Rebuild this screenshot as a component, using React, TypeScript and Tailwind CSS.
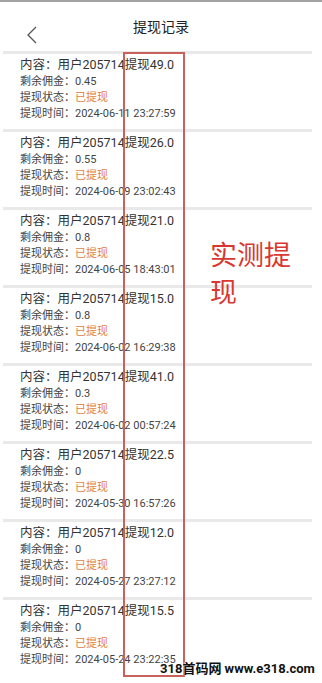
import React from "react";

type Record = {
  amount: string;
  balance: string;
  time: string;
};

const records: Record[] = [
  { amount: "49.0", balance: "0.45", time: "2024-06-11 23:27:59" },
  { amount: "26.0", balance: "0.55", time: "2024-06-09 23:02:43" },
  { amount: "21.0", balance: "0.8", time: "2024-06-05 18:43:01" },
  { amount: "15.0", balance: "0.8", time: "2024-06-02 16:29:38" },
  { amount: "41.0", balance: "0.3", time: "2024-06-02 00:57:24" },
  { amount: "22.5", balance: "0", time: "2024-05-30 16:57:26" },
  { amount: "12.0", balance: "0", time: "2024-05-27 23:27:12" },
  { amount: "15.5", balance: "0", time: "2024-05-24 23:22:35" },
];

function RecordCard({ record }: { record: Record }) {
  return (
    <div>
      <div className="ml-[3px] mr-[10px] h-[3px] bg-[#e9e9e9]" />
      <div className="pl-[20px] pt-[2px] pb-[7px]">
        <p className="text-[12.5px] leading-[18px] text-[#333]">
          内容：用户205714提现{record.amount}
        </p>
        <p className="text-[11px] leading-[16px] text-[#444]">
          剩余佣金：{record.balance}
        </p>
        <p className="text-[11px] leading-[16px] text-[#444]">
          提现状态：<span className="text-[#e27d3e]">已提现</span>
        </p>
        <p className="text-[11px] leading-[16px] text-[#444]">
          提现时间：{record.time}
        </p>
      </div>
    </div>
  );
}

export default function App() {
  return (
    <div
      className="relative h-[683px] w-[322px] overflow-hidden bg-white"
      style={{ fontFamily: 'Roboto, "Noto Sans CJK SC", sans-serif' }}
    >
      <div className="h-[2px] bg-[#a3a3a3]" />
      <header className="relative flex h-[49px] items-center justify-center">
        <svg
          className="absolute left-[26px] top-[24px]"
          width="12"
          height="18"
          viewBox="0 0 12 18"
          fill="none"
        >
          <path d="M10 1 L2 9 L10 17" stroke="#555" strokeWidth="1.3" />
        </svg>
        <h1 className="pt-[1px] text-[14px] text-[#222]">提现记录</h1>
      </header>

      {records.map((r) => (
        <RecordCard key={r.time} record={r} />
      ))}

      {/* annotation overlay */}
      <div className="absolute left-[123px] top-[52px] h-[625px] w-[62px] border-2 border-[#c9625c]" />
      <div className="absolute left-[210px] top-[238px] w-[90px] text-[27px] leading-[37px] text-[#d8382f]">
        实测提现
      </div>
      <div
        className="absolute left-[160px] top-[659px] whitespace-nowrap text-[13px] font-bold text-[#111]"
        style={{ textShadow: "0 0 2px #fff, 0 0 2px #fff" }}
      >
        318首码网 www.e318.com
      </div>
    </div>
  );
}
